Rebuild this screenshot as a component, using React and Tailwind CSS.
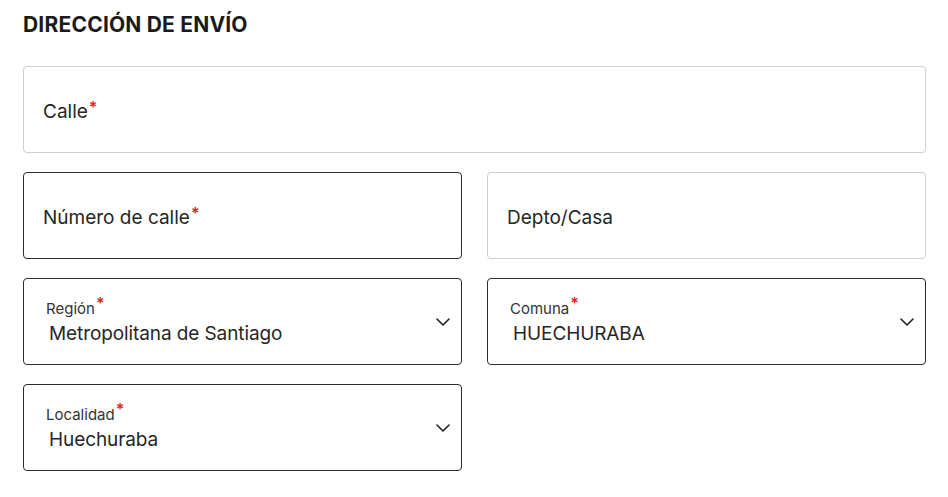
import React from 'react';

const font = { fontFamily: 'Inter, "Noto Sans", sans-serif' };

function Req() {
  return <span className="text-[#e1251b] text-[16px] font-semibold relative -top-[5px] ml-[1px]">*</span>;
}

function TextField({ label, required, dark }) {
  return (
    <div
      className={`h-[87px] rounded-[4px] border bg-white flex items-center pl-[19px] pt-[4px] ${
        dark ? 'border-[#2b2b2b]' : 'border-[#cfcfcf]'
      }`}
    >
      <span className="text-[19px] text-[#262626] leading-[22px]">
        {label}
        {required && <Req />}
      </span>
    </div>
  );
}

function SelectField({ label, value }) {
  return (
    <div className="h-[87px] rounded-[4px] border border-[#2b2b2b] bg-white flex items-center justify-between pl-[22px] pr-[11px]">
      <div className="flex flex-col">
        <span className="text-[15px] leading-[18px] text-[#333]">
          {label}
          <Req />
        </span>
        <span className="text-[19px] leading-[22px] text-[#262626] mt-[5px] ml-[3px] tracking-[-0.1px]">{value}</span>
      </div>
      <svg width="14" height="8" viewBox="0 0 14 8" fill="none">
        <path d="M1 1l6 6 6-6" stroke="#222" strokeWidth="1.6" strokeLinecap="round" strokeLinejoin="round" />
      </svg>
    </div>
  );
}

export default function App() {
  return (
    <div className="w-[948px] h-[497px] bg-white pl-[23px] pr-[22px] pt-[12px]" style={font}>
      {/* Title */}
      <h2 className="text-[21px] font-bold text-[#1a1a1a] leading-[26px] tracking-[0.2px]">DIRECCIÓN DE ENVÍO</h2>

      <div className="mt-[28px] flex flex-col gap-[19px]">
        <TextField label="Calle" required />
        <div className="grid grid-cols-2 gap-x-[25px] gap-y-[19px]">
          <TextField label="Número de calle" required dark />
          <TextField label="Depto/Casa" />
          <SelectField label="Región" value="Metropolitana de Santiago" />
          <SelectField label="Comuna" value="HUECHURABA" />
          <SelectField label="Localidad" value="Huechuraba" />
        </div>
      </div>
    </div>
  );
}
